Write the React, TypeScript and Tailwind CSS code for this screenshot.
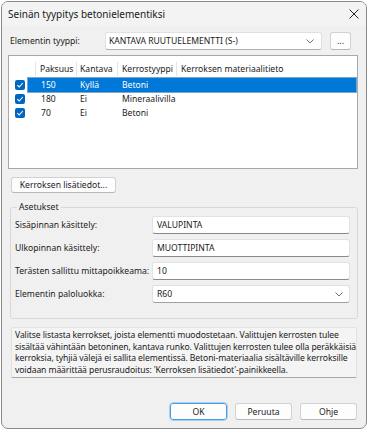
import React from "react";

const Chevron = ({ className = "" }: { className?: string }) => (
  <svg width="8" height="5" viewBox="0 0 8 5" className={className}>
    <path d="M0.5 0.5 L4 4 L7.5 0.5" fill="none" stroke="#606060" strokeWidth="0.9" />
  </svg>
);

const Check = () => (
  <span className="w-[10px] h-[10px] rounded-[2px] bg-[#0067c0] flex items-center justify-center">
    <svg width="8" height="8" viewBox="0 0 8 8">
      <path d="M1.3 4.2 L3.2 6 L6.8 2" fill="none" stroke="white" strokeWidth="1.1" />
    </svg>
  </span>
);

const rows = [
  { p: "150", k: "Kyllä", t: "Betoni", sel: true },
  { p: "180", k: "Ei", t: "Mineraalivilla", sel: false },
  { p: "70", k: "Ei", t: "Betoni", sel: false },
];

const Field = ({ label, value }: { label: string; value: string }) => (
  <div className="flex items-center h-[18px]">
    <div className="w-[137px]">{label}</div>
    <div className="w-[198px] h-[18px] bg-white border border-[#e3e3e3] border-b-[#8a8a8a] rounded-[3px] flex items-center pl-[4px]">
      {value}
    </div>
  </div>
);

const Btn = ({ children, w, primary = false }: { children: React.ReactNode; w: string; primary?: boolean }) => (
  <div
    className={`${w} h-[17px] flex items-center justify-center rounded-[3px] ${
      primary ? "bg-[#fdfdfd] border border-[#4a9be0] outline outline-1 outline-[#a9d0f2]" : "bg-[#fdfdfd] border border-[#d2d2d2] border-b-[#b8b8b8]"
    }`}
  >
    {children}
  </div>
);

export default function App() {
  return (
    <div className="w-[368px] h-[430px] bg-white p-[1px] font-['Noto_Sans','Open_Sans',sans-serif] text-[8.6px] text-[#1a1a1a] leading-[12px]">
      <div className="w-[366px] h-[428px] border border-[#8a8a8a] rounded-[7px] bg-[#f0f0f0] flex flex-col overflow-hidden">
        {/* Title bar */}
        <div className="h-[24px] flex items-center justify-between pl-[6px] pr-[7px] bg-[#f3f3f3]">
          <span className="text-[10px]">Seinän tyypitys betonielementiksi</span>
          <svg width="10" height="10" viewBox="0 0 10 10">
            <path d="M0.5 0.5 L9.5 9.5 M9.5 0.5 L0.5 9.5" stroke="#222" strokeWidth="1" />
          </svg>
        </div>

        <div className="flex flex-col pl-[6px]">
          {/* Element type row */}
          <div className="mt-[6px] h-[18px] flex items-center">
            <div className="w-[97px] pl-[2px]">Elementin tyyppi:</div>
            <div className="w-[217px] h-[18px] bg-white border border-[#e0e0e0] border-b-[#b0b0b0] rounded-[3px] flex items-center justify-between pl-[3px] pr-[7px]">
              <span>KANTAVA RUUTUELEMENTTI (S-)</span>
              <Chevron />
            </div>
            <div className="ml-[8px] w-[21px] h-[18px] bg-[#fdfdfd] border border-[#d2d2d2] border-b-[#b8b8b8] rounded-[3px] flex items-center justify-center">
              ...
            </div>
          </div>

          {/* List */}
          <div className="mt-[5px] w-[350px] h-[114px] bg-white border border-[#a8a8a8] flex flex-col">
            <div className="mt-[6px] h-[14px] flex items-center">
              <div className="w-[26px] h-full" />
              <div className="w-[41px] h-full border-l border-[#e5e5e5] pl-[4px] flex items-center">Paksuus</div>
              <div className="w-[41px] h-full border-l border-[#e5e5e5] pl-[3px] flex items-center">Kantava</div>
              <div className="w-[59px] h-full border-l border-[#e5e5e5] pl-[4px] flex items-center">Kerrostyyppi</div>
              <div className="flex-1 h-full border-l border-[#e5e5e5] pl-[4px] flex items-center">Kerroksen materiaalitieto</div>
            </div>
            <div className="mt-[2px] flex flex-col">
              {rows.map((r) => (
                <div key={r.p} className="h-[14px] flex items-center">
                  <div className="w-[19px] pl-[6px] flex items-center">
                    <Check />
                  </div>
                  <div
                    className={`flex-1 h-full flex items-center mr-[1px] ${
                      r.sel ? "bg-[#0078d7] text-white outline outline-1 outline-[#7aa7d0]" : ""
                    }`}
                  >
                    <div className="w-[48px] pl-[13px]">{r.p}</div>
                    <div className="w-[41px] pl-[4px]">{r.k}</div>
                    <div className="w-[59px] pl-[5px]">{r.t}</div>
                  </div>
                </div>
              ))}
            </div>
          </div>

          {/* Layer details button */}
          <div className="mt-[8px] ml-[3px] w-[105px] h-[16px] bg-[#fdfdfd] border border-[#d2d2d2] border-b-[#b8b8b8] rounded-[3px] flex items-center justify-center">
            Kerroksen lisätiedot...
          </div>

          {/* Settings group */}
          <fieldset className="mt-[8px] ml-[2px] w-[348px] h-[118px] border border-[#d8d8d8] rounded-[3px] pl-[4px] pb-[12px]">
            <legend className="ml-[2px] px-[2px] leading-[12px]">Asetukset</legend>
            <div className="mt-[3px] flex flex-col gap-[5px]">
              <Field label="Sisäpinnan käsittely:" value="VALUPINTA" />
              <Field label="Ulkopinnan käsittely:" value="MUOTTIPINTA" />
              <Field label="Terästen sallittu mittapoikkeama:" value="10" />
              <div className="flex items-center h-[18px]">
                <div className="w-[137px]">Elementin paloluokka:</div>
                <div className="w-[198px] h-[18px] bg-white border border-[#e0e0e0] border-b-[#a0a0a0] rounded-[3px] flex items-center justify-between pl-[4px] pr-[6px]">
                  <span>R60</span>
                  <Chevron />
                </div>
              </div>
            </div>
          </fieldset>

          {/* Info */}
          <div className="mt-[8px] ml-[3px] w-[346px] h-[51px] bg-[#f4f4f4] border border-[#e2e2e2] border-b-[#a8a8a8] rounded-[2px] pl-[3px] pt-[2px] leading-[11.5px] whitespace-nowrap tracking-[-0.1px]">
            <div>Valitse listasta kerrokset, joista elementti muodostetaan. Valittujen kerrosten tulee</div>
            <div>sisältää vähintään betoninen, kantava runko. Valittujen kerrosten tulee olla peräkkäisiä</div>
            <div>kerroksia, tyhjiä välejä ei sallita elementissä. Betoni-materiaalia sisältäville kerroksille</div>
            <div>voidaan määrittää perusraudoitus: 'Kerroksen lisätiedot'-painikkeella.</div>
          </div>

          {/* Buttons */}
          <div className="mt-[25px] ml-[162px] flex gap-[8px]">
            <Btn w="w-[57px]" primary>OK</Btn>
            <Btn w="w-[57px]">Peruuta</Btn>
            <Btn w="w-[57px]">Ohje</Btn>
          </div>
        </div>
      </div>
    </div>
  );
}
